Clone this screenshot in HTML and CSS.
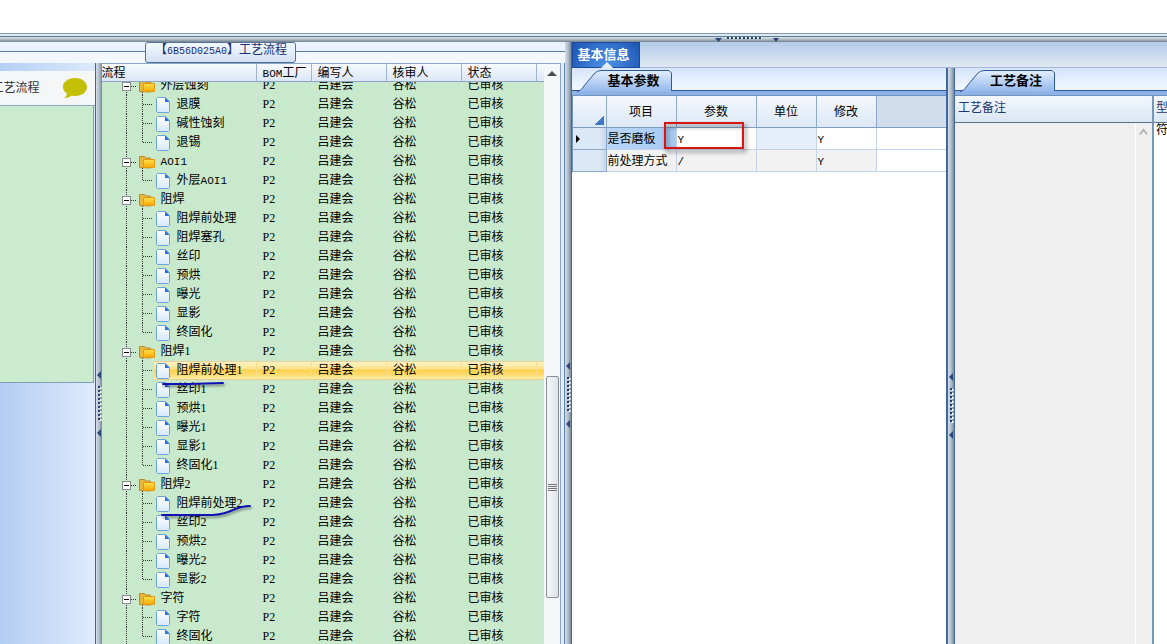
FILE: index.html
```
<!DOCTYPE html>
<html lang="zh-CN">
<head>
  <meta charset="UTF-8">
  <meta name="viewport" content="width=device-width, initial-scale=1.0">
  <title>工艺流程</title>
  <link rel="stylesheet" href="styles.css">
</head>
<body>
  <svg class="defs" aria-hidden="true">
    <defs>
      <linearGradient id="docFill" x1="0" y1="0" x2="0" y2="1">
        <stop offset="0" stop-color="#ffffff"/>
        <stop offset="1" stop-color="#d6e9fb"/>
      </linearGradient>
      <linearGradient id="folderFill" x1="0" y1="0" x2="0" y2="1">
        <stop offset="0" stop-color="#ffe14d"/>
        <stop offset="1" stop-color="#f9a800"/>
      </linearGradient>
      <linearGradient id="tabFill" x1="0" y1="0" x2="0" y2="1">
        <stop offset="0" stop-color="#e3eefd"/>
        <stop offset="1" stop-color="#93b7ec"/>
      </linearGradient>
      <symbol id="grip" viewBox="0 0 6 68">
        <path d="M5 0v8L1 4z" fill="#2a4678"/>
        <path d="M5 58v8L1 62z" fill="#2a4678"/>
        <path d="M4.500 16v34" stroke="#fff" stroke-width="2" stroke-dasharray="2 2"/>
        <path d="M3 15v34" stroke="#233f78" stroke-width="2" stroke-dasharray="2 2"/>
      </symbol>
      <symbol id="folder" viewBox="0 0 16 14">
        <path d="M.5 12.500V1.500h5l1 1.500h5v10z" fill="#e8b83c" stroke="#b98a2c"/>
        <path d="M4.500 4.500h11v8h-11z" fill="url(#folderFill)" stroke="#e29a10"/>
      </symbol>
      <symbol id="doc" viewBox="0 0 14 16">
        <path d="M1.500.5h8l4 4v10l-1 1h-11l-1-1v-13z" fill="url(#docFill)" stroke="#6da3dd"/>
        <path d="M9 .5l4.500 4.500H9z" fill="#2c6fe0"/>
      </symbol>
      <symbol id="tabShape" viewBox="0 0 96 22">
        <path d="M0 21.500C3 21 5 19 7 16L17 4q3-3.500 7-3.500h68l2.500 2.500v19z" fill="url(#tabFill)"/>
        <path d="M0 21.500C3 21 5 19 7 16L17 4q3-3.500 7-3.500h68l2.500 2.500v18" fill="none" stroke="#2f5a98"/>
      </symbol>
    </defs>
  </svg>

  <div class="splitter-top">
    <svg width="64" height="5" viewBox="0 0 64 5">
      <path d="M0 1h7L3.500 5z" fill="#2a4678"/>
      <path d="M58 1h6L61 5z" fill="#2a4678"/>
      <path d="M13 1h36" stroke="#fff" stroke-width="2" stroke-dasharray="2 2"/>
      <path d="M12 1h36" stroke="#233f78" stroke-width="2" stroke-dasharray="2 2"/>
    </svg>
  </div>

  <main class="workspace">
    <section class="process">
      <div class="legend-row">
        <h1 class="legend">【<span class="en">6B56D025A0</span>】工艺流程</h1>
      </div>
      <div class="process-body">
        <aside class="side">
          <div class="side-top"></div>
          <div class="side-head">
            <span>工艺流程</span>
            <svg width="26" height="22" viewBox="0 0 26 22">
              <path d="M13 1c7 0 12 4 12 9s-5 9-12 9q-2 0-3-.5Q7 21 2 21q3-2 3-4.500-4-2.500-4-6.500c0-5 5-9 12-9z" fill="#c3bf04"/>
            </svg>
          </div>
          <div class="side-list"></div>
          <div class="side-rest"></div>
        </aside>
        <div class="splitter"><svg width="6" height="68"><use href="#grip"/></svg></div>
        <div class="tree">
          <div class="tree-view">
            <table class="tree-table tree-head">
              <thead>
                <tr>
                  <th class="c-name">流程</th>
                  <th class="c-bom"><span class="en">BOM</span>工厂</th>
                  <th class="c-user">编写人</th>
                  <th class="c-user">核审人</th>
                  <th class="c-user">状态</th>
                  <th></th>
                </tr>
              </thead>
            </table>
            <div class="tree-scroll">
              <table class="tree-table tree-rows">
                <tbody id="treeRows"></tbody>
              </table>
              <svg class="ink" width="100" height="150" viewBox="0 0 100 150">
                <path d="M3 6h26l34-1"/>
                <path d="M2 137h51q12-1 20-5 9-4 17-4"/>
              </svg>
            </div>
          </div>
          <div class="scrollbar">
            <button type="button" class="scroll-up" aria-label="向上滚动"></button>
            <div class="scroll-before"></div>
            <div class="scroll-thumb"></div>
            <div class="scroll-after"></div>
          </div>
        </div>
      </div>
    </section>

    <div class="splitter"><svg width="6" height="68"><use href="#grip"/></svg></div>

    <section class="detail">
      <nav class="main-tabs">
        <button type="button" class="main-tab">基本信息</button>
      </nav>
      <div class="detail-body">
        <div class="params">
          <div class="sub-tabs">
            <button type="button" class="sub-tab"><svg width="96" height="22"><use href="#tabShape"/></svg><span>基本参数</span></button>
          </div>
          <table class="grid">
            <thead>
              <tr>
                <th class="g-mark"></th>
                <th class="g-item">项目</th>
                <th class="g-param">参数</th>
                <th class="g-unit">单位</th>
                <th class="g-unit">修改</th>
                <th class="g-rest"></th>
              </tr>
            </thead>
            <tbody>
              <tr class="current">
                <td class="mark"><i class="pointer"></i></td>
                <td class="item">是否磨板</td>
                <td class="param"><span class="en">Y</span><span class="red-box"></span></td>
                <td class="unit"></td>
                <td><span class="en">Y</span></td>
                <td></td>
              </tr>
              <tr class="alt">
                <td class="mark"></td>
                <td>前处理方式</td>
                <td><span class="en">/</span></td>
                <td></td>
                <td><span class="en">Y</span></td>
                <td class="blank"></td>
              </tr>
            </tbody>
          </table>
        </div>

        <div class="splitter"><svg width="6" height="68"><use href="#grip"/></svg></div>

        <div class="notes">
          <div class="sub-tabs">
            <button type="button" class="sub-tab notes-tab"><svg width="96" height="22"><use href="#tabShape"/></svg><span>工艺备注</span></button>
          </div>
          <div class="notes-body">
            <div class="note-col">
              <h2>工艺备注</h2>
              <div class="note-area">
                <svg width="9" height="8" viewBox="0 0 9 8"><path d="M1 6.500L4.500 2 8 6.500" fill="none" stroke="#b4b4b4" stroke-width="2"/></svg>
              </div>
            </div>
            <div class="type-col">
              <h2>型</h2>
              <div class="type-area">符</div>
            </div>
          </div>
        </div>
      </div>
    </section>
  </main>

  <script src="script.js"></script>
</body>
</html>
```

FILE: styles.css
```
* {
  box-sizing: border-box;
}
body {
  margin: 0;
  padding-top: 33px;
  height: 100vh;
  display: flex;
  flex-direction: column;
  overflow: hidden;
  background: #fff;
  color: #000;
  font-family: "Liberation Serif", "Noto Sans CJK SC", sans-serif;
  font-size: 12px;
  line-height: 18px;
}
h1, h2 {
  margin: 0;
  font-size: 12px;
  font-weight: normal;
}
button {
  border: 0;
  padding: 0;
  font-family: inherit;
  background: none;
}
svg {
  display: block;
  flex: none;
}
table {
  border-collapse: separate;
  border-spacing: 0;
  table-layout: fixed;
  width: 100%;
}
th, td {
  padding: 0;
  font-weight: normal;
  text-align: left;
  white-space: nowrap;
  overflow: hidden;
}
.en {
  font-family: "Liberation Mono", monospace;
  font-size: 11px;
  line-height: 1;
}
.legend .en {
  font-size: 10px;
}
.defs {
  position: absolute;
  width: 0;
  height: 0;
}

/* splitters */
.splitter-top {
  flex: none;
  height: 9px;
  padding: 4px 0 0 28%;
  display: flex;
  justify-content: center;
  background: linear-gradient(#8497ad 0 1px, #dce8f2 1px 3px, #5f7a8c 3px 4px, #cfdae2 4px 5px, #8797a3 8px, #75858f 9px);
}
.splitter {
  flex: none;
  width: 6px;
  display: flex;
  flex-direction: column;
  background: linear-gradient(to right, #d4dde8, #b3bfcc 50%, #77899a);
}
.splitter::before {
  content: "";
  flex: 3;
}
.splitter::after {
  content: "";
  flex: 2;
}

.workspace {
  flex: 1;
  min-height: 0;
  display: flex;
}

/* process tree */
.process {
  flex: 565 1 0;
  min-width: 0;
  display: flex;
  flex-direction: column;
  background: #eaf2fd;
}
.legend-row {
  flex: none;
  height: 21px;
  padding-left: 145px;
  background: linear-gradient(#eaf2fd 9px, #5f7c9c 9px 10px, #f2f7fe 10px);
}
.legend {
  width: 151px;
  height: 21px;
  padding-right: 8px;
  line-height: 15px;
  text-align: right;
  white-space: nowrap;
  color: #1b2f70;
  border: 1px solid #53719a;
  border-radius: 3px;
  background: linear-gradient(#f3f8fe, #d3e1f4);
}
.process-body {
  flex: 1;
  min-height: 0;
  display: flex;
}
.side {
  flex: 95 1 0;
  min-width: 0;
  display: flex;
  flex-direction: column;
  border-right: 1px solid #3f6496;
  background: linear-gradient(to right, #b3cdf1, #deebfd);
}
.side-top {
  flex: none;
  height: 8px;
  background: linear-gradient(to right, #b5cff5, #dce9fb);
}
.side-head {
  flex: none;
  height: 35px;
  padding-right: 7px;
  display: flex;
  align-items: center;
  justify-content: flex-end;
  gap: 22px;
  overflow: hidden;
  white-space: nowrap;
  color: #333;
  background: #f5f6f8;
  border-bottom: 1px solid #90a8c4;
}
.side-list {
  flex: 277;
  margin-right: 1px;
  background: #cbebcf;
  border: 1px solid #7f9fb8;
  border-width: 0 1px 1px 0;
}
.side-rest {
  flex: 262;
}
.tree {
  flex: 464 1 0;
  min-width: 0;
  display: flex;
  border-right: 1px solid #6284ab;
  background: #e3edfa;
}
.tree-view {
  flex: 1;
  min-width: 0;
  display: flex;
  flex-direction: column;
  background: #c9e9cd;
}
.tree-head {
  flex: none;
}
.tree-head th {
  height: 19px;
  padding-left: 6px;
  line-height: 16px;
  border-top: 1px solid #8ba4c7;
  border-right: 1px solid #9fb3d3;
  border-bottom: 1px solid #8ba4c7;
  background: linear-gradient(#f7faff, #dce6f6);
}
.tree-head th.c-name {
  padding-left: 0;
}
.tree-head th:last-child {
  border-right: 0;
}
.c-name {
  width: 155px;
}
.c-bom {
  width: 55px;
}
.c-user {
  width: 75px;
}
.tree-scroll {
  flex: 1;
  min-height: 0;
  position: relative;
  overflow: hidden;
}
.tree-rows {
  margin-top: -6px;
}
.tree-rows td {
  height: 19px;
  padding-left: 6px;
  line-height: 18px;
  vertical-align: top;
  border-right: 1px solid #d2e5d5;
}
.tree-rows td.c-name {
  padding-left: 0;
}
.tree-rows td:last-child {
  border-right: 0;
}
.node {
  display: flex;
  height: 19px;
  gap: 5px;
}
.selected td {
  border-right-color: #f9dc8c;
  background: linear-gradient(#f0cf94 0 1px, #fff2c4 1px, #ffe28a 8px, #fdcf4c 9px, #ffe07c 15px, #fff0b4 18px, #eccb8a 18px);
}
.selected td.c-name {
  background-repeat: no-repeat;
  background-position: 52px 0;
}
.ink {
  position: absolute;
  left: 58px;
  top: 296px;
  fill: none;
  stroke: #1212b4;
  stroke-width: 2;
  stroke-linecap: round;
  filter: drop-shadow(1px 2px 1px rgba(0, 0, 0, 0.4));
}
.scrollbar {
  flex: none;
  width: 17px;
  margin-right: 3px;
  padding: 0 1px 0 2px;
  display: flex;
  flex-direction: column;
  background: #f6f7f8;
  border-top: 1px solid #8ba4c7;
  border-right: 1px solid #8ba4c7;
}
.scroll-up {
  flex: none;
  height: 18px;
  display: flex;
  align-items: center;
  justify-content: center;
}
.scroll-up::before {
  content: "";
  border: 5px solid transparent;
  border-top: 0;
  border-bottom-color: #4d4d4d;
}
.scroll-before {
  flex: 295;
}
.scroll-thumb {
  flex: 221;
  border: 1px solid #8a8f9c;
  border-radius: 2px;
  background: repeating-linear-gradient(#777 0 1px, transparent 1px 2px) center / 9px 7px no-repeat, linear-gradient(to right, #f4f6f9, #dfe4eb);
}
.scroll-after {
  flex: 46;
}

/* right side */
.detail {
  flex: 596 1 0;
  min-width: 0;
  display: flex;
  flex-direction: column;
  border-left: 1px solid #3f6aa8;
}
.main-tabs {
  flex: none;
  height: 26px;
  display: flex;
  background: linear-gradient(#b4cbe8, #e0e9f4);
  border-bottom: 1px solid #a5b9d2;
}
.main-tab {
  position: relative;
  width: 68px;
  height: 26px;
  padding: 0 4px 3px 0;
  font-size: 13px;
  font-weight: bold;
  color: #fff;
  background: radial-gradient(circle at 50% 100%, #4e93e8, #1d55b4);
  border: 1px solid #1b4a9c;
}
.main-tab::after {
  content: "";
  position: absolute;
  left: 28px;
  bottom: -1px;
  border: 6px solid transparent;
  border-top: 0;
  border-bottom-color: #e8f0fd;
}
.detail-body {
  flex: 1;
  min-height: 0;
  display: flex;
}
.params {
  flex: 376 1 0;
  min-width: 0;
  border-right: 2px solid #4068a0;
  background: #fff;
}
.sub-tabs {
  flex: none;
  height: 28px;
  padding: 2px 0 0 5px;
  background: linear-gradient(#d5e4fb, #f3f8ff 22px, #2f5a98 22px 23px, #8eb2e6 23px 27px, #6f94bf 27px);
}
.sub-tab {
  position: relative;
  display: block;
  width: 96px;
  height: 22px;
  padding-left: 18px;
  line-height: 20px;
  font-size: 13px;
  font-weight: bold;
  color: #000;
}
.sub-tab svg {
  position: absolute;
  left: 0;
  top: 0;
}
.sub-tab span {
  position: relative;
}
.notes-tab {
  padding-left: 16px;
}
.grid {
  border-left: 1px solid #6f94bf;
}
.grid th {
  height: 32px;
  text-align: center;
  border-right: 1px solid #8fa9c8;
  border-bottom: 1px solid #7f9dc2;
  background: linear-gradient(#f4f8fd, #dce8f5);
}
.grid th:last-child,
.grid td:last-child {
  border-right: 0;
}
.grid td {
  height: 22px;
  padding-left: 1px;
  border-right: 1px solid #c3d3ea;
  border-bottom: 1px solid #c3d3ea;
}
.grid th.g-mark {
  width: 34px;
  background: linear-gradient(135deg, transparent 50%, #3f78c8 50%) right 2px bottom 2px / 10px 10px no-repeat, linear-gradient(#f4f8fd, #dce8f5);
}
.g-item {
  width: 70px;
}
.g-param {
  width: 80px;
}
.g-unit {
  width: 60px;
}
.grid th.g-rest {
  background: #cfdded;
}
.grid td.mark {
  padding-left: 3px;
  border-color: #8fa9c8;
  background: linear-gradient(to right, #dbe8f6 80%, #c7d8ec);
}
.pointer {
  display: block;
  width: 0;
  border: 4px solid transparent;
  border-left-color: #000;
  border-right: 0;
}
.current .item {
  background: linear-gradient(to right, #b9d6f7, #a6c9f2);
}
.current .param {
  position: relative;
  overflow: visible;
}
.current .unit {
  background: #e6eef9;
}
.alt td {
  background: #f2f2f2;
}
.alt td.blank {
  background: #fff;
}
.red-box {
  position: absolute;
  left: -13px;
  top: -6px;
  width: 80px;
  height: 27px;
  border: 2px solid #d81414;
  filter: drop-shadow(2px 3px 2px rgba(0, 0, 0, 0.5));
}

/* notes */
.notes {
  flex: 213 1 0;
  min-width: 0;
  display: flex;
  flex-direction: column;
  border-left: 1px solid #4068a0;
}
.notes-body {
  flex: 1;
  min-height: 0;
  display: flex;
}
.notes-body h2 {
  height: 27px;
  padding-left: 3px;
  line-height: 24px;
  color: #22366f;
  background: linear-gradient(#f4f8fd, #d9e6f3);
  border-bottom: 1px solid #52718c;
}
.note-col {
  flex: 1;
  display: flex;
  flex-direction: column;
  border-right: 2px solid #7597b8;
}
.note-area {
  flex: 1;
  padding: 5px 4px 0 0;
  display: flex;
  justify-content: flex-end;
  background: linear-gradient(#fff, #fff) right 16px top / 1px 100% no-repeat, #efefef;
}
.type-col {
  flex: none;
  width: 13px;
  overflow: hidden;
}
.type-col h2 {
  padding-left: 2px;
}
.type-area {
  padding-left: 2px;
  line-height: 14px;
}
```

FILE: script.js
```
const groups = [
  { name: "外层蚀刻", steps: ["退膜", "碱性蚀刻", "退锡"] },
  { name: "AOI1", steps: ["外层AOI1"] },
  { name: "阻焊", steps: ["阻焊前处理", "阻焊塞孔", "丝印", "预烘", "曝光", "显影", "终固化"] },
  { name: "阻焊1", steps: ["阻焊前处理1", "丝印1", "预烘1", "曝光1", "显影1", "终固化1"] },
  { name: "阻焊2", steps: ["阻焊前处理2", "丝印2", "预烘2", "曝光2", "显影2"] },
  { name: "字符", steps: ["字符", "终固化"] }
];
const selected = "阻焊前处理1";

function dots(d) {
  return `<path d="${d}" stroke="#333" stroke-dasharray="1 1" fill="none" shape-rendering="crispEdges"/>`;
}

function folderIcon() {
  return `<svg width="54" height="19">
    ${dots("M24.5 0v19")}${dots("M29 10.5h6")}${dots("M40.5 16v3")}
    <rect x="20.5" y="6.5" width="8" height="8" fill="#fff" stroke="#8c8c8c"/>
    <path d="M22 10.5h5" stroke="#000"/>
    <use href="#folder" x="37" y="3" width="16" height="14"/>
  </svg>`;
}

function stepIcon(last) {
  return `<svg width="70" height="19">
    ${dots("M24.5 0v19")}${dots(last ? "M40.5 0v10" : "M40.5 0v19")}${dots("M41 9.5h10")}
    <use href="#doc" x="54" y="2" width="14" height="16"/>
  </svg>`;
}

function addRow(icon, name) {
  const row = document.createElement("tr");
  if (name === selected) row.className = "selected";
  const label = name.replace("AOI1", '<span class="en">AOI1</span>');
  row.innerHTML = `
    <td class="c-name"><div class="node">${icon}<span>${label}</span></div></td>
    <td class="c-bom">P2</td>
    <td class="c-user">吕建会</td>
    <td class="c-user">谷松</td>
    <td class="c-user">已审核</td>
    <td></td>`;
  document.getElementById("treeRows").appendChild(row);
}

groups.forEach(group => {
  addRow(folderIcon(), group.name);
  group.steps.forEach((step, i) => {
    addRow(stepIcon(i === group.steps.length - 1), step);
  });
});
```
